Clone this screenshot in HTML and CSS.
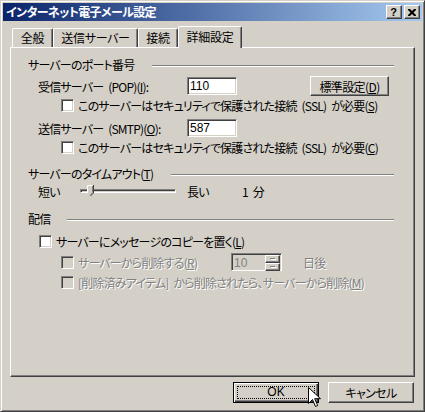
FILE: index.html
```html
<!DOCTYPE html>
<html lang="ja">
	<head>
		<meta charset="UTF-8" />
		<title>インターネット電子メール設定</title>
		<link rel="stylesheet" href="styles.css">
	</head>
	<body>
		<div class="window">
			<div class="titlebar">
				<span class="title">インターネット電子メール設定</span>
				<div class="caption-buttons">
					<span class="cap-btn help">?</span>
					<span class="cap-btn close">
						<svg width="8" height="7" viewBox="0 0 8 7">
							<path d="M0 0h2l2 2 2-2h2v1l-2.5 2.5L8 6v1H6L4 5 2 7H0V6l2.5-2.5L0 1z" fill="#000" />
						</svg>
					</span>
				</div>
			</div>

			<div class="tabs">
				<div class="tab tab-general">全般</div>
				<div class="tab tab-send">送信サーバー</div>
				<div class="tab tab-connect">接続</div>
				<div class="tab tab-advanced active">詳細設定</div>
			</div>

			<div class="panel">
				<div class="group-head">
					<span>サーバーのポート番号</span>
					<span class="line line-ports"></span>
				</div>
				<div class="row row-pop">
					<span class="field-label">受信サーバー (POP)(<u>I</u>):</span>
					<input class="field" type="text" value="110" />
					<span class="spacer"></span>
					<button class="btn btn-defaults">標準設定(<u>D</u>)</button>
				</div>
				<div class="check row-ssl1">
					<span class="box"></span>
					<span>このサーバーはセキュリティで保護された接続 (SSL) が必要(<u>S</u>)</span>
				</div>
				<div class="row row-smtp">
					<span class="field-label">送信サーバー (SMTP)(<u>O</u>):</span>
					<input class="field" type="text" value="587" />
				</div>
				<div class="check row-ssl2">
					<span class="box"></span>
					<span>このサーバーはセキュリティで保護された接続 (SSL) が必要(<u>C</u>)</span>
				</div>

				<div class="group-head head-timeout">
					<span>サーバーのタイムアウト(<u>T</u>)</span>
					<span class="line line-timeout"></span>
				</div>
				<div class="row row-slider">
					<span class="slider-short">短い</span>
					<div class="slider">
						<div class="track"></div>
						<svg class="thumb" width="7" height="11" viewBox="0 0 7 11">
							<path d="M0.5 0.5h5v7l-2.5 3l-2.5-3z" fill="#d4d0c8" />
							<path d="M0.5 8V0.5h5" fill="none" stroke="#fff" />
							<path d="M6.5 0v8l-3 3" fill="none" stroke="#404040" />
							<path d="M5.5 1v6.5l-2.5 3" fill="none" stroke="#808080" />
						</svg>
					</div>
					<span class="slider-long">長い</span>
					<span>1 分</span>
				</div>

				<div class="group-head head-delivery">
					<span>配信</span>
					<span class="line line-delivery"></span>
				</div>
				<div class="check row-leave">
					<span class="box"></span>
					<span>サーバーにメッセージのコピーを置く(<u>L</u>)</span>
				</div>
				<div class="check row-remove disabled">
					<span class="box"></span>
					<span class="remove-label">サーバーから削除する(<u>R</u>)</span>
					<div class="spin">
						<span class="spin-value">10</span>
						<div class="spin-btns">
							<span class="spin-btn"><i class="arrow up"></i></span>
							<span class="spin-btn"><i class="arrow down"></i></span>
						</div>
					</div>
					<span class="days">日後</span>
				</div>
				<div class="check row-deleted disabled">
					<span class="box"></span>
					<span>[削除済みアイテム] から削除されたら、サーバーから削除(<u>M</u>)</span>
				</div>
			</div>

			<div class="buttons">
				<button class="btn btn-ok"><span class="focus">OK</span></button>
				<button class="btn btn-cancel">キャンセル</button>
				<svg class="cursor" width="13" height="21" viewBox="0 0 13 21">
					<path d="M0.5 0.5v16l4-4 3 7 2.2-1-3-6.8h5.8z" fill="#fff" stroke="#000" stroke-linejoin="miter" />
				</svg>
			</div>
		</div>
	</body>
</html>
```

FILE: styles.css
```css
* {
	box-sizing: border-box;
}
body {
	margin: 0;
	padding: 0;
	background-color: #d4d0c8;
	color: #000;
	font-family: "Noto Sans CJK JP", "Noto Sans", sans-serif;
	font-size: 12px;
	font-feature-settings: "palt";
	letter-spacing: -0.8px;
	word-spacing: 3px;
}
u {
	text-decoration-thickness: 1px;
	text-underline-offset: 1px;
}

/* window frame */
.window {
	width: 425px;
	height: 412px;
	border: 1px solid;
	border-color: #d4d0c8 #404040 #404040 #d4d0c8;
	box-shadow: inset 1px 1px #fff, inset -1px -1px #808080;
	padding: 2px;
	display: flex;
	flex-direction: column;
}
.titlebar {
	height: 18px;
	background: linear-gradient(to right, #0a246a, #a6caf0);
	display: flex;
	align-items: center;
	justify-content: space-between;
	padding: 0 2px 0 3px;
}
.title {
	color: #fff;
	font-weight: bold;
	line-height: 18px;
	letter-spacing: -0.6px;
}
.caption-buttons {
	display: flex;
	gap: 2px;
}
.cap-btn {
	width: 16px;
	height: 14px;
	background-color: #d4d0c8;
	border: 1px solid;
	border-color: #fff #404040 #404040 #fff;
	box-shadow: inset -1px -1px #808080;
	display: flex;
	align-items: center;
	justify-content: center;
}
.help {
	font-family: "Liberation Sans", sans-serif;
	font-weight: bold;
	font-size: 11px;
	line-height: 12px;
	letter-spacing: 0;
	padding-right: 1px;
}

/* tabs */
.tabs {
	display: flex;
	align-items: flex-end;
	height: 21px;
	margin: 5px 0 0 9px;
	position: relative;
	z-index: 1;
}
.tab {
	height: 19px;
	border: 1px solid;
	border-color: #fff #404040 transparent #fff;
	border-bottom: none;
	border-radius: 2px 2px 0 0;
	box-shadow: inset -1px 0 #808080;
	text-align: center;
	line-height: 17px;
	letter-spacing: -0.3px;
	background-color: #d4d0c8;
}
.tab-general {
	width: 41px;
}
.tab-send {
	width: 85px;
}
.tab-connect {
	width: 40px;
}
.tab-advanced {
	width: 64px;
}
.tab.active {
	height: 22px;
	margin-bottom: -1px;
	line-height: 19px;
}

/* panel */
.panel {
	height: 330px;
	margin: 0 7px;
	border: 1px solid;
	border-color: #fff #404040 #404040 #fff;
	box-shadow: inset -1px -1px #808080;
	padding: 10px 20px 0 17px;
	display: flex;
	flex-direction: column;
}
.group-head {
	display: flex;
	align-items: center;
	height: 14px;
	line-height: 14px;
}
.group-head .line {
	flex: 1;
	height: 2px;
	border-top: 1px solid #808080;
	border-bottom: 1px solid #fff;
	margin-top: 2px;
}
.line-ports {
	margin-left: 18px;
}
.line-timeout {
	margin-left: 18px;
}
.line-delivery {
	margin-left: 17px;
}
.head-timeout {
	margin-top: 13px;
}
.head-delivery {
	margin-top: 14px;
}
.row {
	display: flex;
	align-items: center;
	padding-left: 10px;
}
.row-pop {
	height: 20px;
	margin-top: 4px;
}
.row-smtp {
	height: 18px;
	margin-top: 7px;
}
.row-slider {
	height: 14px;
	margin-top: 3px;
}
.field-label {
	width: 149px;
	white-space: nowrap;
}
.field {
	width: 50px;
	height: 18px;
	margin: 0;
	padding: 0 2px;
	font: inherit;
	font-family: "Liberation Sans", sans-serif;
	font-size: 12px;
	letter-spacing: 0;
	background-color: #fff;
	border: 1px solid;
	border-color: #808080 #fff #fff #808080;
	box-shadow: inset 1px 1px #404040, inset -1px -1px #d4d0c8;
	outline: none;
}
.spacer {
	flex: 1;
}

/* buttons */
.btn {
	height: 20px;
	margin: 0;
	padding: 0;
	font: inherit;
	letter-spacing: -0.6px;
	color: #000;
	background-color: #d4d0c8;
	border: 1px solid;
	border-color: #fff #404040 #404040 #fff;
	box-shadow: inset -1px -1px #808080;
}
.btn-defaults {
	width: 79px;
	margin-right: 5px;
}

/* checkboxes */
.check {
	display: flex;
	align-items: center;
	height: 13px;
	gap: 3px;
	padding-left: 33px;
	white-space: nowrap;
}
.box {
	width: 13px;
	height: 13px;
	flex: none;
	background-color: #fff;
	border: 1px solid;
	border-color: #808080 #fff #fff #808080;
	box-shadow: inset 1px 1px #404040, inset -1px -1px #d4d0c8;
	margin-right: 1px;
}
.row-ssl1 {
	margin-top: 3px;
}
.row-ssl2 {
	margin-top: 4px;
}
.row-leave {
	margin-top: 9px;
	padding-left: 11px;
}
.row-remove {
	height: 18px;
	margin-top: 5px;
}
.row-deleted {
	margin-top: 5px;
}
.disabled {
	color: #808080;
	text-shadow: 1px 1px 0 #fff;
}
.disabled .box {
	background-color: #d4d0c8;
}
.remove-label {
	width: 150px;
}
.spin {
	width: 51px;
	height: 18px;
	display: flex;
	align-items: center;
	justify-content: space-between;
	background-color: #d4d0c8;
	border: 1px solid;
	border-color: #808080 #fff #fff #808080;
	box-shadow: inset 1px 1px #404040;
	padding: 1px 1px 0 1px;
	text-shadow: none;
}
.spin-value {
	font-family: "Liberation Sans", sans-serif;
	letter-spacing: 0;
	padding-left: 1px;
}
.spin-btns {
	display: flex;
	flex-direction: column;
	width: 15px;
	height: 16px;
}
.spin-btn {
	height: 8px;
	border: 1px solid;
	border-color: #fff #404040 #404040 #fff;
	box-shadow: inset -1px -1px #808080;
	display: flex;
	align-items: center;
	justify-content: center;
}
.arrow {
	width: 5px;
	height: 1px;
	background-color: #808080;
	box-shadow: 1px 1px #fff;
}
.days {
	margin-left: 18px;
}

/* slider */
.slider-short {
	width: 42px;
}
.slider {
	width: 96px;
	height: 14px;
	position: relative;
	display: flex;
	align-items: center;
}
.track {
	width: 100%;
	height: 4px;
	border: 1px solid;
	border-color: #808080 #fff #fff #808080;
	box-shadow: inset 1px 1px #404040;
}
.thumb {
	position: absolute;
	left: 7px;
	top: 1px;
}
.slider-long {
	width: 55px;
	margin-left: 11px;
}

/* dialog buttons */
.buttons {
	display: flex;
	justify-content: flex-end;
	gap: 9px;
	margin: 5px 8px 0 0;
	position: relative;
}
.btn-ok,
.btn-cancel {
	width: 86px;
	height: 21px;
}
.btn-ok {
	border: 1px solid #000;
	box-shadow: inset 1px 1px #fff, inset -1px -1px #404040, inset -2px -2px #808080;
	padding: 3px;
}
.focus {
	display: block;
	height: 100%;
	border: 1px dotted #000;
	font-family: "Liberation Sans", sans-serif;
	letter-spacing: 0;
	line-height: 11px;
}
.cursor {
	position: absolute;
	left: 305px;
	top: 5px;
}
```
